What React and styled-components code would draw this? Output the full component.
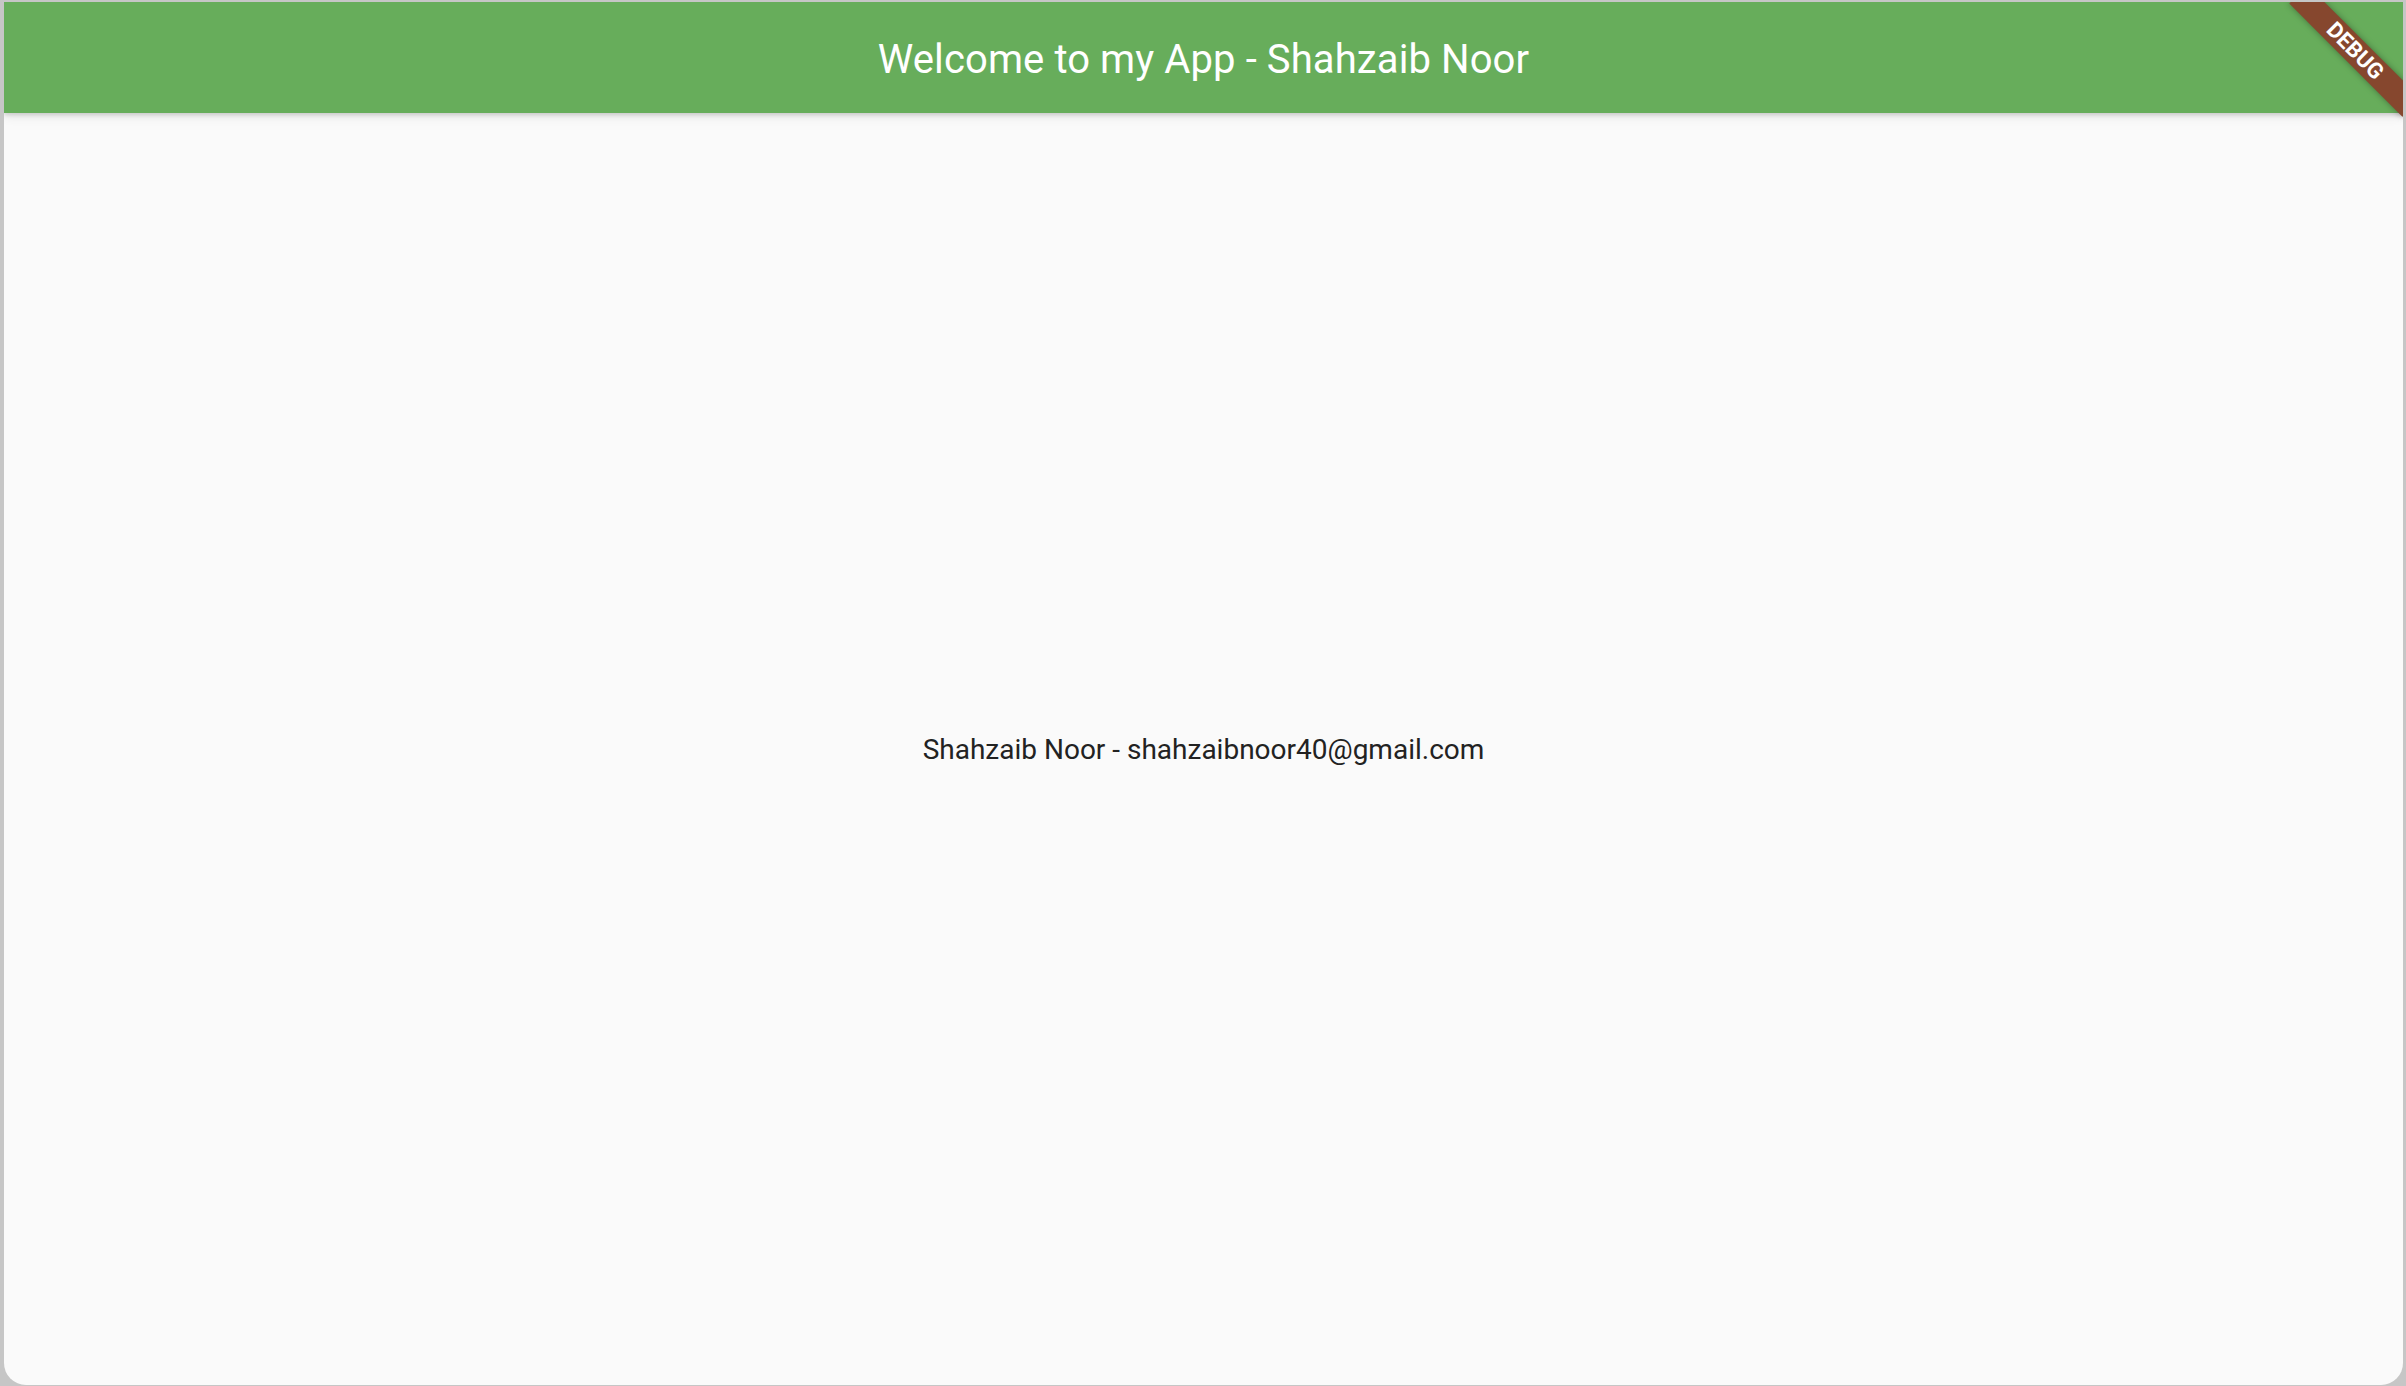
import React from "react"
import styled, { createGlobalStyle } from "styled-components"

const GlobalStyle = createGlobalStyle`
  html, body {
    margin: 0;
    padding: 0;
    height: 100%;
  }
  body {
    background: #c6c6c6;
    font-family: Roboto, "Liberation Sans", sans-serif;
  }
  #root {
    height: 100%;
  }
`

const Screen = styled.div`
  height: 100vh;
  box-sizing: border-box;
  padding: 2px 3px 1px 4px;
  display: flex;
`

const Window = styled.div`
  position: relative;
  flex: 1;
  display: flex;
  flex-direction: column;
  overflow: hidden;
  background: #fafafa;
  border-radius: 0 0 22px 22px;
`

const AppBar = styled.header`
  height: 111px;
  flex-shrink: 0;
  display: flex;
  align-items: center;
  justify-content: center;
  background: #67ad5b;
  box-shadow: 0 2px 4px rgba(0, 0, 0, 0.14), 0 4px 10px rgba(0, 0, 0, 0.08);
  z-index: 1;
`

const Title = styled.h1`
  margin: 0;
  color: #fff;
  font-size: 40px;
  font-weight: 400;
  letter-spacing: 0.1px;
  padding-top: 4px;
`

const Body = styled.main`
  flex: 1;
  display: flex;
  align-items: center;
  justify-content: center;
`

const Contact = styled.p`
  margin: 0;
  color: #222;
  font-size: 28px;
`

const Ribbon = styled.div`
  position: absolute;
  top: 36px;
  right: -32px;
  width: 160px;
  height: 26px;
  transform: rotate(45deg);
  background: #86472e;
  box-shadow: 0 0 6px rgba(0, 0, 0, 0.35);
  color: #fff;
  font-size: 22px;
  font-weight: 700;
  line-height: 26px;
  text-align: center;
  z-index: 2;
`

const App = () => {
  return (
    <>
      <GlobalStyle />
      <Screen>
        <Window>
          <AppBar>
            <Title>Welcome to my App - Shahzaib Noor</Title>
          </AppBar>
          <Body>
            <Contact>Shahzaib Noor - shahzaibnoor40@gmail.com</Contact>
          </Body>
          <Ribbon>DEBUG</Ribbon>
        </Window>
      </Screen>
    </>
  )
}

export default App
